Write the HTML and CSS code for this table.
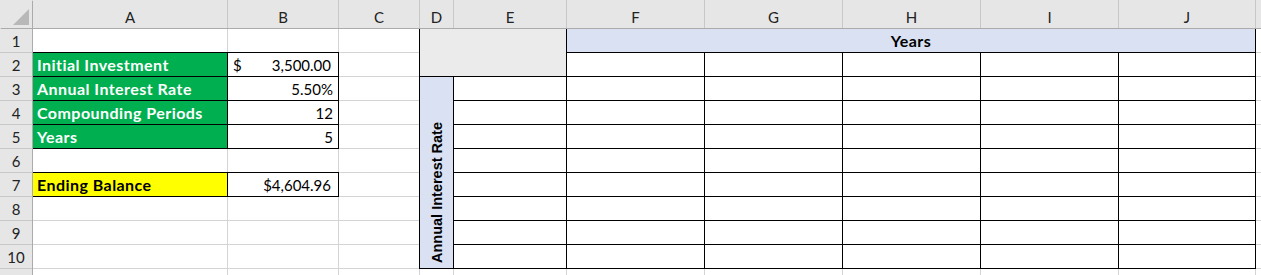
FILE: index.html
```html
<!DOCTYPE html>
<html lang="en">

<head>
    <meta charset="UTF-8">
    <title>Compound Interest</title>
    <link rel="stylesheet" href="styles.css">
</head>

<body>

    <div class="sheet">
        <!-- column headers -->
        <div class="corner"><svg width="16" height="16" viewBox="0 0 16 16"><polygon points="16,0 16,16 0,16" fill="#b8b8b8"/></svg></div>
        <div class="col">A</div>
        <div class="col">B</div>
        <div class="col">C</div>
        <div class="col">D</div>
        <div class="col">E</div>
        <div class="col">F</div>
        <div class="col">G</div>
        <div class="col">H</div>
        <div class="col">I</div>
        <div class="col">J</div>
        <div class="col"></div>

        <!-- row 1 -->
        <div class="row">1</div>
        <div></div>
        <div></div>
        <div></div>
        <div class="blank-block b"></div>
        <div class="years b">Years</div>
        <div></div>

        <!-- row 2 -->
        <div class="row">2</div>
        <div class="lab b">Initial Investment</div>
        <div class="acct b"><span>$</span><span>3,500.00</span></div>
        <div></div>
        <div class="b"></div>
        <div class="b"></div>
        <div class="b"></div>
        <div class="b"></div>
        <div class="b"></div>
        <div></div>

        <!-- row 3 -->
        <div class="row">3</div>
        <div class="lab b">Annual Interest Rate</div>
        <div class="num b">5.50%</div>
        <div></div>
        <div class="rate b"><span>Annual Interest Rate</span></div>
        <div class="b"></div>
        <div class="b"></div>
        <div class="b"></div>
        <div class="b"></div>
        <div class="b"></div>
        <div class="b"></div>
        <div></div>

        <!-- row 4 -->
        <div class="row">4</div>
        <div class="lab b">Compounding Periods</div>
        <div class="num b">12</div>
        <div></div>
        <div class="b"></div>
        <div class="b"></div>
        <div class="b"></div>
        <div class="b"></div>
        <div class="b"></div>
        <div class="b"></div>
        <div></div>

        <!-- row 5 -->
        <div class="row">5</div>
        <div class="lab b">Years</div>
        <div class="num b">5</div>
        <div></div>
        <div class="b"></div>
        <div class="b"></div>
        <div class="b"></div>
        <div class="b"></div>
        <div class="b"></div>
        <div class="b"></div>
        <div></div>

        <!-- row 6 -->
        <div class="row">6</div>
        <div></div>
        <div></div>
        <div></div>
        <div class="b"></div>
        <div class="b"></div>
        <div class="b"></div>
        <div class="b"></div>
        <div class="b"></div>
        <div class="b"></div>
        <div></div>

        <!-- row 7 -->
        <div class="row">7</div>
        <div class="end b">Ending Balance</div>
        <div class="num total b">$4,604.96</div>
        <div></div>
        <div class="b"></div>
        <div class="b"></div>
        <div class="b"></div>
        <div class="b"></div>
        <div class="b"></div>
        <div class="b"></div>
        <div></div>

        <!-- row 8 -->
        <div class="row">8</div>
        <div></div>
        <div></div>
        <div></div>
        <div class="b"></div>
        <div class="b"></div>
        <div class="b"></div>
        <div class="b"></div>
        <div class="b"></div>
        <div class="b"></div>
        <div></div>

        <!-- row 9 -->
        <div class="row">9</div>
        <div></div>
        <div></div>
        <div></div>
        <div class="b"></div>
        <div class="b"></div>
        <div class="b"></div>
        <div class="b"></div>
        <div class="b"></div>
        <div class="b"></div>
        <div></div>

        <!-- row 10 -->
        <div class="row">10</div>
        <div></div>
        <div></div>
        <div></div>
        <div class="b"></div>
        <div class="b"></div>
        <div class="b"></div>
        <div class="b"></div>
        <div class="b"></div>
        <div class="b"></div>
        <div></div>

        <!-- next row, only its top edge shows -->
        <div class="row"></div>
        <div></div>
        <div></div>
        <div></div>
        <div></div>
        <div></div>
        <div></div>
        <div></div>
        <div></div>
        <div></div>
        <div></div>
        <div></div>
    </div>

</body>

</html>
```

FILE: styles.css
```css
html,
body {
    margin: 0;
    overflow: hidden;
    background: #ffffff;
}

body {
    font-family: Lato, "Liberation Sans", sans-serif;
    font-size: 15px;
    color: #000000;
}

/* the worksheet: 1px gaps show through as gridlines */
.sheet {
    display: grid;
    grid-template-columns: 32px 194px 110px 80px 33px 112px 137px 137px 137px 137px 136px 120px;
    grid-template-rows: 28px repeat(11, 23px);
    gap: 1px;
    background: #d4d4d4;
    width: max-content;
}

.sheet > div {
    background: #ffffff;
    display: flex;
    align-items: center;
    padding: 0 4px;
    white-space: nowrap;
}

/* headers sit above the cell borders */
.corner,
.col,
.row {
    position: relative;
    z-index: 1;
    color: #222222;
}

.sheet > .corner {
    background: #e6e6e6;
    justify-content: flex-end;
    align-items: flex-end;
    padding: 0 3px 3px 0;
    box-shadow: 1px 1px 0 #ababab;
}

.sheet > .col {
    background: #e6e6e6;
    justify-content: center;
    align-items: flex-end;
    padding: 0 0 2px;
    box-shadow: 1px 0 0 #c8c8c8, 0 1px 0 #ababab, 1px 1px 0 #ababab;
}

.sheet > .row {
    background: #e6e6e6;
    justify-content: center;
    padding: 0;
    box-shadow: 1px 0 0 #ababab, 0 1px 0 #c8c8c8, 1px 1px 0 #ababab;
}

/* thin black cell border */
.b {
    box-shadow: 0 0 0 1px #000000;
}

.sheet > .lab,
.sheet > .end,
.sheet > .years {
    font-size: 16px;
    font-weight: bold;
    letter-spacing: 0.45px;
}

.sheet > .lab {
    background: #00b050;
    color: #ffffff;
}

.sheet > .end {
    background: #ffff00;
}

.sheet > .num {
    justify-content: flex-end;
    padding-right: 5px;
}

.sheet > .total {
    padding-right: 7px;
}

.sheet > .acct {
    justify-content: space-between;
    padding: 0 7px 0 5px;
}

.sheet > .blank-block {
    grid-column: 5 / 7;
    grid-row: 2 / 4;
    background: #ebebeb;
}

.sheet > .years {
    grid-column: 7 / 12;
    grid-row: 2;
    background: #d9e1f2;
    justify-content: center;
}

.sheet > .rate {
    grid-column: 5;
    grid-row: 4 / 12;
    background: #d9e1f2;
    justify-content: center;
    align-items: flex-end;
    padding: 0 0 5px;
}

.rate span {
    writing-mode: vertical-rl;
    transform: rotate(180deg);
    font-family: "Liberation Sans", Arial, sans-serif;
    font-size: 14.5px;
    font-weight: bold;
}
```
